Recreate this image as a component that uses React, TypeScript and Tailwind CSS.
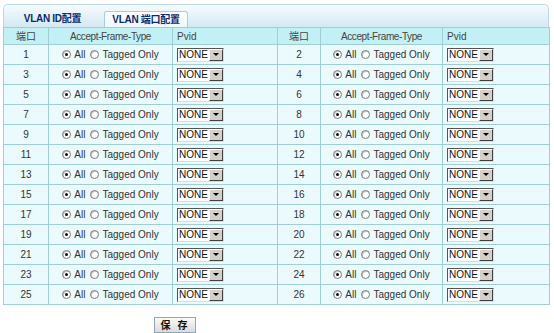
import React from 'react';

const rows = Array.from({ length: 13 }, (_, i) => [i * 2 + 1, i * 2 + 2]);

const font = { fontFamily: '"Liberation Sans", "Noto Sans CJK SC", sans-serif' };

const Radio: React.FC<{ checked?: boolean }> = ({ checked }) => (
  <span className="inline-flex w-[9px] h-[9px] rounded-full border border-[#7a7a7a] bg-white items-center justify-center shadow-[inset_1px_1px_0_#c8c8c8]">
    {checked && <span className="w-[3px] h-[3px] rounded-full bg-[#111]" />}
  </span>
);

const FrameType: React.FC = () => (
  <div className="flex items-center justify-center text-[10px] text-[#333]">
    <Radio checked />
    <span className="ml-[3px] mr-[5px]">All</span>
    <Radio />
    <span className="ml-[3px]">Tagged Only</span>
  </div>
);

const PvidSelect: React.FC = () => (
  <div className="flex h-[14px] w-[47px] border border-[#555] border-r-[#ddd] border-b-[#ddd] bg-white">
    <span className="flex-1 pl-[1px] text-[10px] leading-[12px] text-[#111]">NONE</span>
    <span className="w-[14px] h-[12px] bg-[#d4d0c8] border border-t-white border-l-white border-r-[#404040] border-b-[#404040] flex items-center justify-center">
      <span className="w-0 h-0 border-l-[3px] border-r-[3px] border-t-[3px] border-l-transparent border-r-transparent border-t-black" />
    </span>
  </div>
);

export default function App() {
  return (
    <div className="w-[554px] h-[333px] bg-white overflow-hidden" style={font}>
      <div className="ml-[3px] mt-[4px] w-[546px] border-t border-l border-r border-[#b9d9e8] rounded-t-[5px]">
        <div className="h-[22px] flex items-end bg-gradient-to-b from-[#f6fbfd] to-[#d4e9f4] rounded-t-[5px]">
          <div className="w-[97px] h-[17px] flex items-center justify-center text-[10px] font-bold text-[#0b2a6e] tracking-[-0.3px]">
            VLAN ID配置
          </div>
          <div className="ml-[3px] w-[84px] h-[16px] flex items-center justify-center text-[10px] font-bold text-[#0b2a6e] tracking-[-0.3px] bg-gradient-to-b from-white to-[#eef7fb] border border-b-0 border-[#a8cde0] rounded-t-[3px]">
            VLAN 端口配置
          </div>
        </div>
        <table className="table-fixed border-collapse w-[546px] -ml-px text-[10px] text-[#333]">
          <colgroup>
            <col className="w-[45px]" />
            <col className="w-[124px]" />
            <col className="w-[105px]" />
            <col className="w-[43px]" />
            <col className="w-[122px]" />
            <col className="w-[107px]" />
          </colgroup>
          <thead>
            <tr className="h-[17px] bg-[#c3f0f5] text-[#444]">
              <th className="border border-[#9fcfd4] font-normal">端口</th>
              <th className="border border-[#9fcfd4] font-normal tracking-[-0.4px]">Accept-Frame-Type</th>
              <th className="border border-[#9fcfd4] font-normal text-left pl-[4px]">Pvid</th>
              <th className="border border-[#9fcfd4] font-normal">端口</th>
              <th className="border border-[#9fcfd4] font-normal tracking-[-0.4px]">Accept-Frame-Type</th>
              <th className="border border-[#9fcfd4] font-normal text-left pl-[4px]">Pvid</th>
            </tr>
          </thead>
          <tbody>
            {rows.map(([a, b]) => (
              <tr key={a} className="h-[20px] bg-[#ebfafd]">
                <td className="border border-[#9fcfd4] text-center">{a}</td>
                <td className="border border-[#9fcfd4]"><FrameType /></td>
                <td className="border border-[#9fcfd4] pl-[4px]"><PvidSelect /></td>
                <td className="border border-[#9fcfd4] text-center">{b}</td>
                <td className="border border-[#9fcfd4]"><FrameType /></td>
                <td className="border border-[#9fcfd4] pl-[4px]"><PvidSelect /></td>
              </tr>
            ))}
          </tbody>
        </table>
      </div>
      <div className="mt-[12px] ml-[154px] w-[42px] h-[16px] flex items-center justify-center text-[10px] font-bold text-[#111] bg-gradient-to-b from-[#fafafa] to-[#dcdcdc] border border-[#8fa6b4] tracking-[2px]">
        保 存
      </div>
    </div>
  );
}
